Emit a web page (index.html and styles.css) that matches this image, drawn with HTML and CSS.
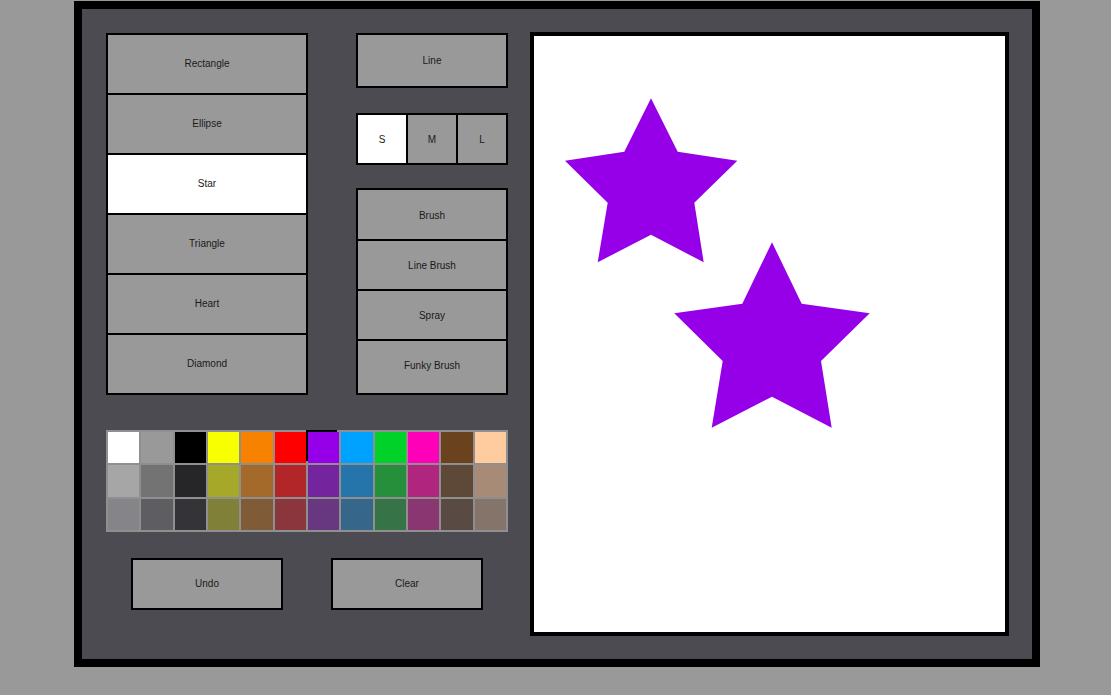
FILE: index.html
```html
<!DOCTYPE html>
<html>
<head>
<meta charset="utf-8">
<title>Paint</title>
<link rel="stylesheet" href="styles.css">
</head>
<body>
<div class="frame">
  <div class="panel">
    <div class="tools">
      <div class="shapes">
        <div class="btn shape">Rectangle</div>
        <div class="btn shape">Ellipse</div>
        <div class="btn shape active">Star</div>
        <div class="btn shape">Triangle</div>
        <div class="btn shape">Heart</div>
        <div class="btn shape">Diamond</div>
      </div>
      <div class="side">
        <div class="btn line">Line</div>
        <div class="sizes">
          <div class="btn size active">S</div>
          <div class="btn size">M</div>
          <div class="btn size">L</div>
        </div>
        <div class="brushes">
          <div class="btn brush b1">Brush</div>
          <div class="btn brush">Line Brush</div>
          <div class="btn brush">Spray</div>
          <div class="btn brush b4">Funky Brush</div>
        </div>
      </div>
    </div>
    <div class="palette">
      <div class="sw" style="background:#ffffff"></div>
      <div class="sw" style="background:#999999"></div>
      <div class="sw" style="background:#000000"></div>
      <div class="sw" style="background:#f8ff00"></div>
      <div class="sw" style="background:#f78200"></div>
      <div class="sw" style="background:#ff0000"></div>
      <div class="sw selected" style="background:#9500e8"></div>
      <div class="sw" style="background:#00a2ff"></div>
      <div class="sw" style="background:#00d22a"></div>
      <div class="sw" style="background:#ff00b9"></div>
      <div class="sw" style="background:#6a421d"></div>
      <div class="sw" style="background:#ffcca0"></div>

      <div class="sw" style="background:#a6a6a6"></div>
      <div class="sw" style="background:#737373"></div>
      <div class="sw" style="background:#262628"></div>
      <div class="sw" style="background:#a6a82a"></div>
      <div class="sw" style="background:#a36a2a"></div>
      <div class="sw" style="background:#b22529"></div>
      <div class="sw" style="background:#74249d"></div>
      <div class="sw" style="background:#2574aa"></div>
      <div class="sw" style="background:#268f3c"></div>
      <div class="sw" style="background:#b0267e"></div>
      <div class="sw" style="background:#5e4837"></div>
      <div class="sw" style="background:#a88b76"></div>

      <div class="sw" style="background:#858589"></div>
      <div class="sw" style="background:#5e5e62"></div>
      <div class="sw" style="background:#343438"></div>
      <div class="sw" style="background:#808039"></div>
      <div class="sw" style="background:#7f5b38"></div>
      <div class="sw" style="background:#8a363c"></div>
      <div class="sw" style="background:#673880"></div>
      <div class="sw" style="background:#36668a"></div>
      <div class="sw" style="background:#367448"></div>
      <div class="sw" style="background:#8a3670"></div>
      <div class="sw" style="background:#594a43"></div>
      <div class="sw" style="background:#85746a"></div>
    </div>
    <div class="actions">
      <div class="btn action">Undo</div>
      <div class="btn action">Clear</div>
    </div>
  </div>
  <div class="canvas">
    <svg class="drawing" viewBox="0 0 471 596" width="471" height="596">
      <polygon fill="#9500e8" points="117,62.3 143.7,115.7 203.3,124.7 160.3,166.7 169.7,226.3 117,198.7 63.7,226.3 73.7,166.7 31,124.7 90.3,115.7"/>
      <polygon fill="#9500e8" points="238,206.3 267.7,267.7 335.7,277.3 287,325 297.7,391.7 238,360.7 177.7,391.7 188.7,325 140.3,277.3 208.3,267.7"/>
    </svg>
  </div>
</div>
</body>
</html>
```

FILE: styles.css
```css
* {
  box-sizing: border-box;
}

html, body {
  margin: 0;
  padding: 0;
  background: #999999;
  font-family: "Liberation Sans", Arial, Helvetica, sans-serif;
}

body {
  width: 1111px;
  height: 695px;
  overflow: hidden;
}

.frame {
  margin: 1px 0 0 74px;
  width: 966px;
  height: 666px;
  border: 8px solid #000;
  background: #4c4b51;
  display: flex;
  align-items: flex-start;
  padding: 23px 0 0 24px;
}

.panel {
  width: 402px;
  margin-top: 1px;
  display: flex;
  flex-direction: column;
}

.tools {
  display: flex;
  justify-content: space-between;
  align-items: flex-start;
}

.btn {
  background: #999999;
  border: 2px solid #000;
  color: #1a1a1a;
  font-size: 10px;
  display: flex;
  align-items: center;
  justify-content: center;
}

.btn.active {
  background: #ffffff;
}

.shapes {
  width: 202px;
  display: flex;
  flex-direction: column;
}

.shape {
  height: 62px;
  padding-bottom: 2px;
}

.shape + .shape {
  margin-top: -2px;
}

.side {
  width: 152px;
  display: flex;
  flex-direction: column;
}

.line {
  height: 55px;
}

.sizes {
  display: flex;
  margin-top: 25px;
}

.size {
  width: 52px;
  height: 52px;
}

.size + .size {
  margin-left: -2px;
}

.brushes {
  margin-top: 23px;
  display: flex;
  flex-direction: column;
}

.brush {
  height: 52px;
  margin-top: -2px;
}

.brush.b1 {
  margin-top: 0;
  height: 53px;
  padding-top: 1px;
}

.brush.b4 {
  height: 56px;
  padding-bottom: 4px;
}

.palette {
  margin-top: 35px;
  height: 102px;
  background: #8f8f8f;
  padding: 2px;
  display: grid;
  grid-template-columns: repeat(12, 1fr);
  grid-template-rows: repeat(3, 1fr);
  gap: 2px;
}

.sw.selected {
  box-shadow: -2px -2px 0 0 #000;
}

.actions {
  margin-top: 26px;
  display: flex;
  justify-content: center;
  gap: 48px;
}

.action {
  width: 152px;
  height: 52px;
  padding-bottom: 2px;
}

.canvas {
  margin-left: 22px;
  width: 479px;
  height: 604px;
  border: 4px solid #000;
  background: #ffffff;
}

.drawing {
  display: block;
}
```
